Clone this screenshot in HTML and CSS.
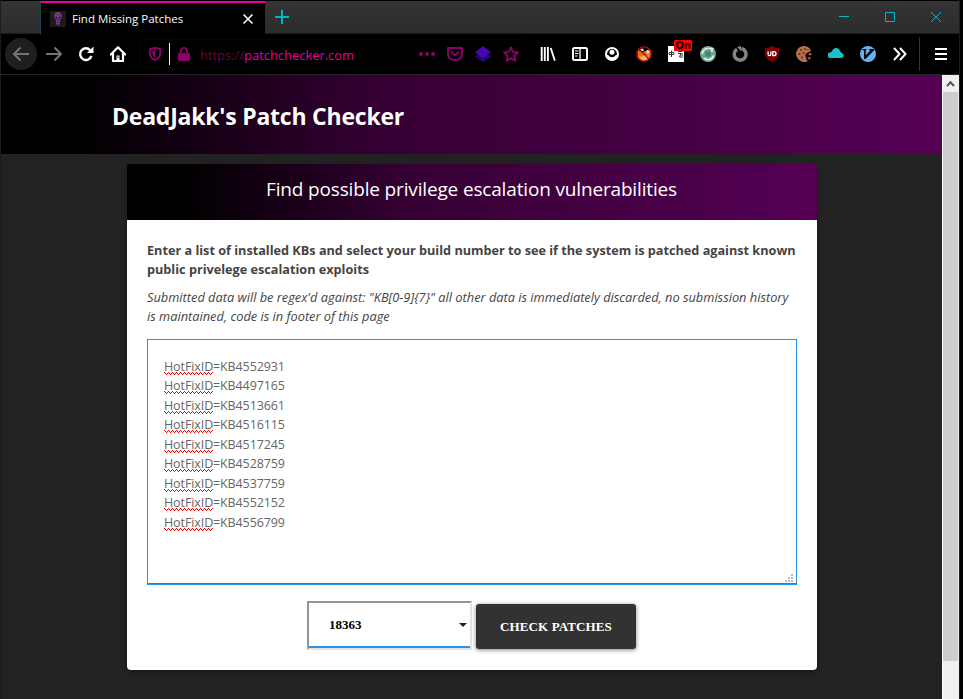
FILE: index.html
```
<!DOCTYPE html>
<html lang="en">
<head>
<meta charset="utf-8">
<title>Find Missing Patches</title>
<link rel="stylesheet" href="styles.css">
</head>
<body>
<div class="window">
  <div class="tabbar">
    <div class="tab">
      <svg class="favicon" width="16" height="16" viewBox="0 0 16 16"><rect width="16" height="16" fill="#1b1b1b"/><path d="M5 2q3-2 6 0l1 3-1 3-1 1v4q-2 2-4 0V9L5 8 4 5z" fill="#74397f"/><path d="M5.500 6h1.500v1.500H6zM9 6h1.500L10 7.500H9zM7.700 8.500h.6v1h-.6zM6.500 11.500h3M6 3.500h1M9 4h1" fill="#211624" stroke="#2b1a2f" stroke-width=".5"/></svg>
      <span class="tab-title">Find Missing Patches</span>
      <svg class="tab-close" width="12" height="12" viewBox="0 0 12 12"><path d="M1.500 1.500l9 9M10.500 1.500l-9 9" stroke="#f0f0f0" stroke-width="1.700"/></svg>
    </div>
    <svg class="new-tab" width="14" height="14" viewBox="0 0 14 14"><path d="M7 0v14M0 7h14" stroke="#00b8c8" stroke-width="2"/></svg>
    <div class="controls">
      <svg width="46" height="32" viewBox="0 0 46 32"><path d="M18 15.500h10" stroke="#00b8c8"/></svg>
      <svg width="46" height="32" viewBox="0 0 46 32"><path d="M18.500 11.500h9v9h-9z" fill="none" stroke="#00b8c8"/></svg>
      <svg width="46" height="32" viewBox="0 0 46 32"><path d="M18 11l10 10M28 11L18 21" fill="none" stroke="#00b8c8"/></svg>
    </div>
  </div>
  <div class="toolbar">
    <span class="slot back"><svg width="18" height="16" viewBox="0 0 18 16"><path d="M17 8H2M8.500 1.500L2 8l6.500 6.500" fill="none" stroke="#747474" stroke-width="2"/></svg></span>
    <span class="slot"><svg width="18" height="16" viewBox="0 0 18 16"><path d="M1 8h15M9.500 1.500L16 8l-6.500 6.500" fill="none" stroke="#747474" stroke-width="2"/></svg></span>
    <span class="slot"><svg width="16" height="16" viewBox="0 0 16 16"><path d="M12.200 4.200A5.800 5.800 0 1 0 13.400 10" fill="none" stroke="#fff" stroke-width="2.400"/><path d="M15.500.5V7H9z" fill="#fff"/></svg></span>
    <span class="slot"><svg width="16" height="16" viewBox="0 0 16 16"><path d="M.8 8.500L8 1.300l7.200 7.200M3 7.500V15h10V7.500" fill="none" stroke="#fff" stroke-width="2.200" stroke-linejoin="round" stroke-linecap="round"/><path d="M6.500 9.500h3v5h-3z" fill="#fff"/><path d="M8 10.500v1.500" stroke="#000"/></svg></span>
    <div class="urlbar">
      <svg class="shield" width="14" height="14" viewBox="0 0 14 14"><path d="M7 1l5.200 1v4.500Q12 11 7 13.200 2 11 1.800 6.500V2z" fill="none" stroke="#8b0069" stroke-width="1.900" stroke-linejoin="round"/><path d="M7 3.500v7Q4.300 9 4.300 6V4z" fill="#8b0069"/></svg>
      <span class="identity-line"></span>
      <svg class="lock" width="14" height="14" viewBox="0 0 14 14"><path d="M3.800 7V4.300a3.200 3.200 0 0 1 6.400 0V7" fill="none" stroke="#8b0069" stroke-width="2"/><rect x="1" y="6" width="12" height="8" rx="1" fill="#8b0069"/></svg>
      <span class="url"><span class="scheme">https://</span>patchchecker.com</span>
      <div class="actions">
        <svg width="16" height="16" viewBox="0 0 16 16"><g fill="#8b0069"><circle cx="2" cy="8" r="2"/><circle cx="8" cy="8" r="2"/><circle cx="14" cy="8" r="2"/></g></svg>
        <svg width="16" height="16" viewBox="0 0 16 16"><path d="M1 2h14v5q0 7-7 7T1 7z" fill="none" stroke="#8b0069" stroke-width="2" stroke-linejoin="round"/><path d="M4.800 6.300L8 9.400l3.200-3.100" fill="none" stroke="#8b0069" stroke-width="2" stroke-linecap="round" stroke-linejoin="round"/></svg>
        <svg width="16" height="16" viewBox="0 0 16 16"><path d="M0 10.500L8 5l8 5.500L8 16z" fill="#22087c"/><path d="M0 6.200L8 0l8 6.200-8 6.300z" fill="#4706ae"/></svg>
        <svg width="16" height="16" viewBox="0 0 16 16"><path d="M8 1.400l2 4.500 4.900.6-3.600 3.300 1 4.900L8 12.300l-4.300 2.400 1-4.900L1.100 6.500 6 5.900z" fill="none" stroke="#8b0069" stroke-width="1.900" stroke-linejoin="round"/></svg>
      </div>
    </div>
    <div class="extensions">
      <span class="slot"><svg width="16" height="16" viewBox="0 0 16 16"><path d="M1.700 1v14M4.800 1v14M7.900 1v14" stroke="#fff" stroke-width="1.900"/><path d="M10.700 2l4.200 12.700" stroke="#fff" stroke-width="1.800"/></svg></span>
      <span class="slot"><svg width="16" height="16" viewBox="0 0 16 16"><rect x="1" y="2" width="14" height="12" rx="1.500" fill="none" stroke="#fff" stroke-width="2"/><path d="M8 2v12" stroke="#fff" stroke-width="1.300"/><path d="M3 5h3.500M3 7.500h3.500M3 10h2.500" stroke="#fff"/></svg></span>
      <span class="slot"><svg width="16" height="16" viewBox="0 0 16 16"><circle cx="8" cy="8" r="6" fill="none" stroke="#fff" stroke-width="2.100"/><circle cx="8" cy="6.300" r="2.500" fill="#fff"/><path d="M2.800 9h2q3.200 3.300 6.400 0h2q-.7 4.600-5.200 4.600T2.800 9z" fill="#fff"/><path d="M4.400 8.700q3.600 4.100 7.200 0" stroke="#000" stroke-width="1.200" fill="none"/></svg></span>
      <span class="slot"><svg width="16" height="16" viewBox="0 0 16 16"><path d="M1.500 8l.5-4 4 2 4-1 4-2 1.200 5-1 4-3.500 3H6L2 12z" fill="#df7215"/><path d="M3 10l3 1 2-2 3 1 2-1-2 4-3 2-3-2z" fill="#efb56d"/><path d="M4 3l3-.5L8 5 5 5zM10.500 4l3 1-1 3-2-1z" fill="#ddd"/><circle cx="8" cy="8" r="7.200" fill="none" stroke="#b80c0c" stroke-width="1.300"/><path d="M3 3l10 10" stroke="#b00" stroke-width="1.200"/></svg></span>
      <span class="slot badge-slot"><svg width="16" height="16" viewBox="0 0 16 16"><path d="M0 0h16v16H0z" fill="#fff"/><path d="M1.200 6.500h4.600v2H1.200zM3.500 4.500v6.500M10 5.500h4.500M10 7.500h3l-1.500 3.500H15M14 7v3" fill="none" stroke="#333"/></svg><b class="badge">On</b></span>
      <span class="slot"><svg width="16" height="16" viewBox="0 0 16 16"><circle cx="8" cy="8" r="8" fill="#70a794"/><path d="M8 2.300A5.700 5.700 0 0 0 2.300 8M4 12a5.700 5.700 0 0 0 9.500-2.500M8.500 2.500h5M12 3v3" fill="none" stroke="#e9f4ef" stroke-width="1.600"/><circle cx="8" cy="8" r="3" fill="#478872"/></svg></span>
      <span class="slot"><svg width="16" height="16" viewBox="0 0 16 16"><path d="M9.500 2.500a5.900 5.900 0 1 1-4.500.7" fill="none" stroke="#858585" stroke-width="3.500"/><path d="M5 1l4 4V0z" fill="#858585"/></svg></span>
      <span class="slot"><svg width="16" height="16" viewBox="0 0 16 16"><path d="M8 0q3 2 7 2v5q0 6-7 9-7-3-7-9V2q4 0 7-2z" fill="#800000"/><path d="M4.100 5.500v2.700q0 1.500 1.400 1.500t1.400-1.500V5.500M8.800 5.700v4h1q2.200 0 2.200-2t-2.200-2z" fill="none" stroke="#fff" stroke-width="1.300"/></svg></span>
      <span class="slot"><svg width="16" height="16" viewBox="0 0 16 16"><path d="M8 0a8 8 0 1 0 4 15l-2-1.500.5-2L9 10l1.500-3 3-1L15 4.500A8 8 0 0 0 8 0z" fill="#b5704e"/><path d="M12 8l3-1 .8 1.500-2 1zM11.500 12l2.500-1 .8 1.500-1.500 1z" fill="#b5704e"/><g fill="#4d2618"><circle cx="5" cy="4" r=".9"/><circle cx="9" cy="3" r=".9"/><circle cx="3.500" cy="8" r="1"/><circle cx="7.500" cy="7" r=".9"/><circle cx="6" cy="11.500" r="1"/><circle cx="12" cy="4" r=".7"/></g></svg></span>
      <span class="slot"><svg width="16" height="16" viewBox="0 0 16 16"><path d="M2.500 12A2.800 2.800 0 0 1 2.300 6.400Q3.500 5.500 4.500 5.800A4.200 4.200 0 0 1 12 5.500q1 .2 1.500 1.200A2.700 2.700 0 0 1 13.500 12z" fill="#18c1c9"/><path d="M3 7l2-3.500Q8 .8 11 3.200L13 7z" fill="#18c1c9"/></svg></span>
      <span class="slot"><svg width="16" height="16" viewBox="0 0 16 16"><circle cx="8" cy="8" r="8" fill="#69b2e8"/><path d="M2.500 3h4v1.200h-.8v5L10.500 4.200H9.200V3h5v1.200L5.500 13H4V4.200H2.500z" fill="#05090d"/></svg></span>
      <span class="slot"><svg width="16" height="16" viewBox="0 0 16 16"><path d="M2 2l5.500 6L2 14M8 2l5.500 6L8 14" fill="none" stroke="#fff" stroke-width="2"/></svg></span>
    </div>
    <span class="menu"><svg width="12" height="12" viewBox="0 0 12 12"><path d="M0 1h12M0 6h12M0 11h12" stroke="#fff" stroke-width="2"/></svg></span>
  </div>
  <div class="viewport">
    <main class="page">
      <header class="masthead"><h1>DeadJakk's Patch Checker</h1></header>
      <section class="card">
        <h2>Find possible privilege escalation vulnerabilities</h2>
        <div class="card-body">
          <p class="lead">Enter a list of installed KBs and select your build number to see if the system is patched against known public privelege escalation exploits</p>
          <p class="note">Submitted data will be regex'd against: "KB[0-9]{7}" all other data is immediately discarded, no submission history is maintained, code is in footer of this page</p>
          <div class="hotfixes">
            <div><u>HotFixID</u>=KB4552931</div>
            <div><u>HotFixID</u>=KB4497165</div>
            <div><u>HotFixID</u>=KB4513661</div>
            <div><u>HotFixID</u>=KB4516115</div>
            <div><u>HotFixID</u>=KB4517245</div>
            <div><u>HotFixID</u>=KB4528759</div>
            <div><u>HotFixID</u>=KB4537759</div>
            <div><u>HotFixID</u>=KB4552152</div>
            <div><u>HotFixID</u>=KB4556799</div>
            <svg class="grip" width="8" height="8" viewBox="0 0 8 8"><path d="M6 0h2v2H6zM3 3h2v2H3zM6 3h2v2H6zM0 6h2v2H0zM3 6h2v2H3zM6 6h2v2H6z" fill="#bababa"/></svg>
          </div>
          <div class="form-row">
            <div class="select"><div class="select-inner"><span>18363</span><svg width="8" height="4" viewBox="0 0 8 4"><path d="M0 0h8L4 4z" fill="#222"/></svg></div></div>
            <button class="submit">CHECK PATCHES</button>
          </div>
        </div>
      </section>
    </main>
    <div class="scrollbar">
      <svg width="15" height="17" viewBox="0 0 15 17"><path d="M4 11l3.500-3.700L11 11" fill="none" stroke="#555" stroke-width="2"/></svg>
      <div class="thumb"></div>
    </div>
  </div>
</div>
</body>
</html>
```

FILE: styles.css
```
* { box-sizing: border-box; }
body {
  margin: 0;
  background: #000;
  font-family: "Open Sans", "Noto Sans", sans-serif;
  overflow: hidden;
}
svg { display: block; flex: none; }
.window {
  width: 960px;
  height: 699px;
  padding-top: 1px;
  border-left: 1px solid #1c1c1c;
  border-right: 1px solid #1c1c1c;
  display: flex;
  flex-direction: column;
}
.tabbar {
  height: 33px;
  flex: none;
  display: flex;
  background: linear-gradient(#343434, #2c2c2c);
  border-bottom: 1px solid #1c1c1c;
}
.tab {
  width: 225px;
  height: 33px;
  margin-left: 39px;
  padding: 0 11px 0 9px;
  display: flex;
  align-items: center;
  background: #000;
  border-top: 2px solid #f000a4;
  border-left: 1px solid #16474b;
}
.tab-title {
  margin-left: 6px;
  color: #f9f9fa;
  font-size: 11.5px;
  white-space: nowrap;
}
.tab-close { margin-left: auto; }
.new-tab { margin: 9px 0 0 10px; }
.controls { display: flex; margin-left: auto; }
.toolbar {
  height: 41px;
  flex: none;
  display: flex;
  align-items: center;
  padding-left: 4px;
  background: #000;
  border-bottom: 1px solid #242424;
}
.slot {
  width: 32px;
  height: 32px;
  flex: none;
  display: flex;
  align-items: center;
  justify-content: center;
}
.back { background: #1f1f1f; border-radius: 50%; margin-right: 1px; }
.urlbar {
  width: 386px;
  height: 30px;
  flex: none;
  margin-left: 6px;
  padding-left: 7px;
  display: flex;
  align-items: center;
  border: 1px solid #060606;
}
.identity-line { width: 1px; height: 22px; margin: 0 7px; background: #f0f0f0; }
.url {
  margin: 1px 0 0 9px;
  color: #e0009b;
  font-size: 13px;
  letter-spacing: -0.04px;
}
.scheme { color: #68004a; }
.actions { display: flex; gap: 12px; margin: 0 6px 0 auto; }
.extensions { display: flex; margin-left: 6px; }
.badge-slot { position: relative; }
.badge {
  position: absolute;
  left: 14px;
  top: 2px;
  width: 18px;
  height: 11px;
  border-radius: 1px;
  background: #f00;
  color: #190000;
  font: 700 10px/11px "DejaVu Sans", sans-serif;
  letter-spacing: -0.4px;
  text-align: center;
}
.menu {
  height: 34px;
  margin-left: 3px;
  padding-left: 15px;
  display: flex;
  align-items: center;
  border-left: 1px solid #333;
}
.viewport { flex: 1; min-height: 0; display: flex; }
.page { flex: 1; background: #222; }
.masthead, .card h2 {
  background: linear-gradient(to right, #000 8%, #360034 41%, #550055);
}
.masthead { height: 79px; padding: 21px 0 0 111px; }
.masthead h1 {
  margin: 0;
  color: #fff;
  font-size: 23px;
  line-height: 40px;
  letter-spacing: -0.22px;
}
.card {
  width: 690px;
  height: 506px;
  margin: 10px 0 0 126px;
  border-radius: 4px;
  background: #fff;
  box-shadow: 0 2px 5px rgba(0, 0, 0, .3);
}
.card h2 {
  height: 56px;
  margin: 0;
  padding-right: 1px;
  border-radius: 2px 2px 0 0;
  color: #fff;
  text-align: center;
  font-size: 19px;
  font-weight: 400;
  line-height: 51px;
  letter-spacing: -0.16px;
}
.card-body { padding: 21px 20px 0; color: #444; }
.card-body p { margin: 0; line-height: 19px; }
.lead { font-size: 12.7px; font-weight: 700; letter-spacing: -0.01px; }
.card-body .note { margin-top: 9px; font-size: 12.8px; font-style: italic; }
.hotfixes {
  position: relative;
  height: 246px;
  margin-top: 13px;
  padding: 17px 16px;
  border: 1px solid #2795e9;
  box-shadow: inset 0 -1px #cb25e5;
  color: #666;
  font-size: 12.5px;
  line-height: 19px;
  letter-spacing: -0.1px;
}
.hotfixes div { height: 19px; }
.hotfixes div:nth-child(even) { height: 20px; }
.hotfixes u {
  display: inline-block;
  width: 49px;
  height: 19px;
  vertical-align: top;
  text-decoration: none;
  background: url("data:image/svg+xml,%3Csvg xmlns='http://www.w3.org/2000/svg' width='4' height='3'%3E%3Cpath d='M0 0h1v1h-1zM1 1h1v1h-1zM2 2h1v1h-1zM3 1h1v1h-1z' fill='%23f00' shape-rendering='crispEdges'/%3E%3C/svg%3E") 0 15px / 4px 3px repeat-x;
}
.grip { position: absolute; right: 3px; bottom: 2px; }
.form-row { display: flex; margin: 16px 0 0 160px; }
.select {
  width: 165px;
  height: 49px;
  border: 2px solid;
  border-color: #959595 #e3e3e3 #e3e3e3 #959595;
}
.select-inner {
  height: 45px;
  padding: 1px 3px 0 20px;
  display: flex;
  align-items: center;
  justify-content: space-between;
  border-bottom: 2px solid #2196f3;
  color: #000;
  font: 700 13px "Liberation Serif", serif;
}
.submit {
  width: 160px;
  height: 45px;
  margin: 3px 0 0 4px;
  padding: 0;
  border: 0;
  border-radius: 3px;
  background: #323232;
  box-shadow: 0 1px 4px rgba(0, 0, 0, .5);
  color: #fff;
  font: 700 13px "Liberation Serif", serif;
  letter-spacing: 0.12px;
}
.scrollbar {
  width: 17px;
  padding: 0 1px 0 0;
  background: #f0f0f0;
  border-left: 1px solid #fff;
}
.thumb { height: 569px; background: #cdcdcd; }
```
